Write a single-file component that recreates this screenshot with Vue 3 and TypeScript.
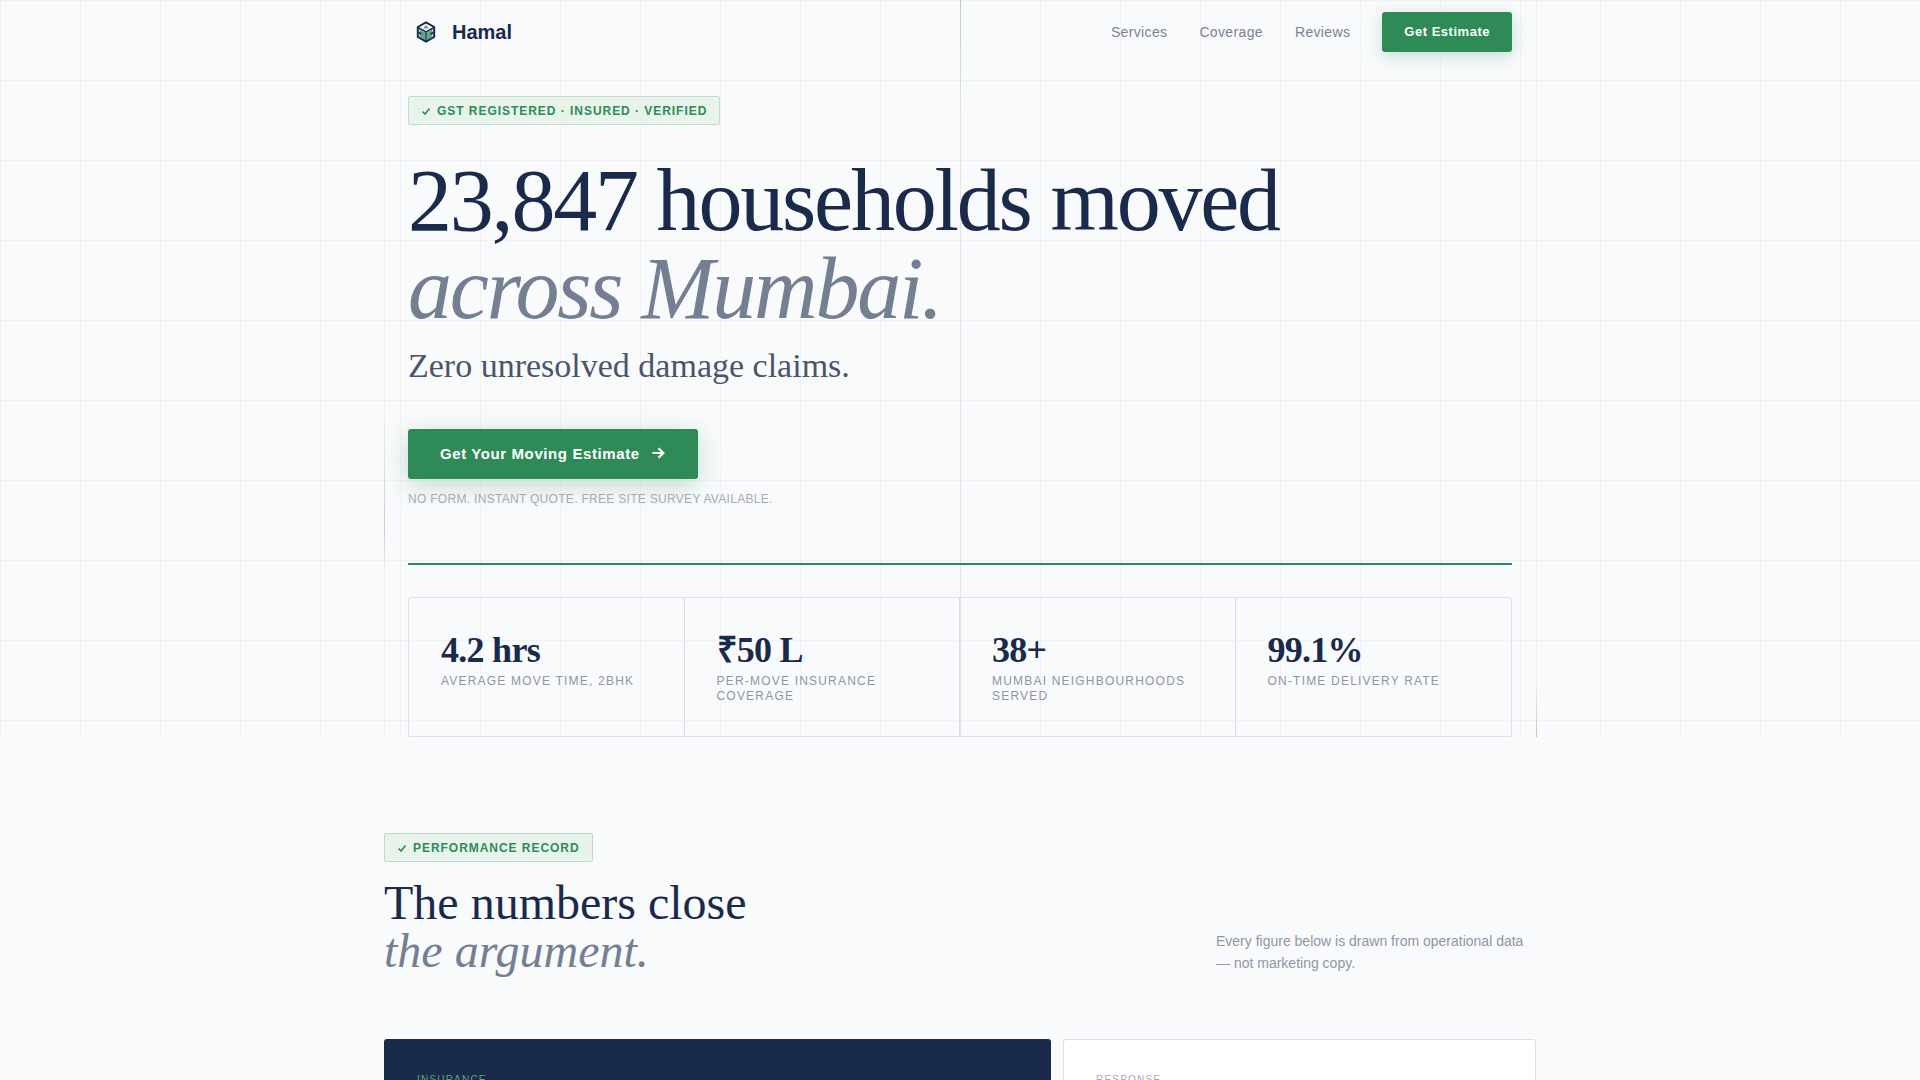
<script setup lang="ts">
// Hamal landing page: hero with stats strip, then the start of the performance section
interface Stat {
  value: string
  label: string
}

const navLinks: string[] = ['Services', 'Coverage', 'Reviews']

const stats: Stat[] = [
  { value: '4.2 hrs', label: 'Average move time, 2BHK' },
  { value: '₹50 L', label: 'Per-move insurance coverage' },
  { value: '38+', label: 'Mumbai neighbourhoods served' },
  { value: '99.1%', label: 'On-time delivery rate' }
]
</script>

<template>
  <div class="page">
    <section class="hero">
      <div class="grid-bg" aria-hidden="true"></div>
      <div class="rail rail-left" aria-hidden="true"></div>
      <div class="rail rail-center" aria-hidden="true"></div>
      <div class="rail rail-right" aria-hidden="true"></div>

      <div class="hero-inner">
        <nav class="nav">
          <a class="brand" href="#">
            <svg class="brand-icon" width="20" height="22" viewBox="0 0 20 22" fill="none">
              <path d="M10 4 7 7.500h6z" fill="#5fa883" />
              <path d="M3.500 8.500 9 11.500V19l-5.500-3z" fill="#5fa883" />
              <path d="M16.500 8.500 11 11.500V19l5.500-3z" fill="#5fa883" />
              <path d="M10 1.300 18.200 6v10L10 20.700 1.800 16V6z" stroke="#1a2a4a" stroke-width="2" stroke-linejoin="round" />
              <path d="M2 6.500 10 11l8-4.500M10 11v9.500M2.500 11.500l3 1.500M17.500 11.500l-3 1.500" stroke="#1a2a4a" stroke-width="1.500" />
            </svg>
            <span>Hamal</span>
          </a>
          <div class="nav-links">
            <a v-for="link in navLinks" :key="link" href="#">{{ link }}</a>
            <button class="nav-btn" type="button">Get Estimate</button>
          </div>
        </nav>

        <div class="badge">
          <svg width="10" height="10" viewBox="0 0 10 10" fill="none">
            <path d="M1.500 5.500 4 8l4.500-5.500" stroke="currentColor" stroke-width="1.600" />
          </svg>
          <span>GST Registered · Insured · Verified</span>
        </div>

        <h1 class="headline">
          23,847 households moved<br />
          <em>across Mumbai.</em>
        </h1>
        <p class="subhead">Zero unresolved damage claims.</p>

        <button class="cta" type="button">
          <span>Get Your Moving Estimate</span>
          <svg width="16" height="16" viewBox="0 0 16 16" fill="none">
            <path d="M2.500 8h10.500M8.500 3.200 13.300 8l-4.800 4.800" stroke="currentColor" stroke-width="2.200" />
          </svg>
        </button>
        <p class="cta-note">No form. Instant quote. Free site survey available.</p>

        <div class="divider"></div>

        <div class="stats">
          <div v-for="stat in stats" :key="stat.label" class="stat">
            <div class="stat-value">{{ stat.value }}</div>
            <div class="stat-label">{{ stat.label }}</div>
          </div>
        </div>
      </div>
    </section>

    <section class="record">
      <div class="record-head">
        <div>
          <div class="badge">
            <svg width="10" height="10" viewBox="0 0 10 10" fill="none">
              <path d="M1.500 5.500 4 8l4.500-5.500" stroke="currentColor" stroke-width="1.600" />
            </svg>
            <span>Performance Record</span>
          </div>
          <h2 class="record-title">
            The numbers close<br />
            <em>the argument.</em>
          </h2>
        </div>
        <p class="record-note">Every figure below is drawn from operational data — not marketing copy.</p>
      </div>

      <div class="bento">
        <div class="card card-dark"><span class="card-label">Insurance</span></div>
        <div class="card card-light"><span class="card-label">Response</span></div>
      </div>
    </section>
  </div>
</template>

<style scoped>
.page {
  height: 100vh;
  overflow: hidden;
  background: #f9fafc;
  font-family: 'Liberation Sans', Arial, sans-serif;
  color: #1a2a4a;
}

.hero {
  position: relative;
  height: 737px;
}

.grid-bg {
  position: absolute;
  inset: 0;
  background-image:
    linear-gradient(to right, rgba(26, 42, 74, 0.035) 1px, transparent 1px),
    linear-gradient(to bottom, rgba(26, 42, 74, 0.035) 1px, transparent 1px);
  background-size: 80px 80px;
}

.rail {
  position: absolute;
  top: 0;
  bottom: 0;
  width: 1px;
}

.rail-left {
  left: 384px;
  background: linear-gradient(to bottom, rgba(26, 42, 74, 0.04) 0, rgba(26, 42, 74, 0.04) 55%, rgba(26, 42, 74, 0.22) 72%, rgba(26, 42, 74, 0.04) 78%);
}

.rail-center {
  left: 960px;
  background: linear-gradient(to bottom, rgba(46, 139, 87, 0.3) 0, rgba(26, 42, 74, 0.07) 16%, rgba(26, 42, 74, 0.07) 100%);
}

.rail-right {
  left: 1536px;
  background: linear-gradient(to bottom, rgba(26, 42, 74, 0.04) 0, rgba(26, 42, 74, 0.04) 92%, rgba(26, 42, 74, 0.25) 100%);
}

.hero-inner {
  position: relative;
  width: 1104px;
  margin: 0 auto;
}

.nav {
  display: flex;
  align-items: center;
  justify-content: space-between;
  height: 64px;
}

.brand {
  display: flex;
  align-items: center;
  gap: 16px;
  padding-left: 8px;
  font-size: 20px;
  font-weight: 700;
  color: #1a2a4a;
  text-decoration: none;
}

.nav-links {
  display: flex;
  align-items: center;
  gap: 32px;
}

.nav-links a {
  font-size: 14px;
  letter-spacing: 0.025em;
  color: #7b8291;
  text-decoration: none;
}

.nav-btn {
  height: 40px;
  padding: 0 22px 2px;
  border: 0;
  border-radius: 3px;
  background: #2e8b57;
  color: #fff;
  font-family: inherit;
  font-size: 13px;
  font-weight: 700;
  letter-spacing: 0.04em;
  box-shadow: 0 4px 16px rgba(46, 139, 87, 0.25);
}

.badge {
  display: inline-flex;
  align-items: center;
  gap: 6px;
  height: 29px;
  box-sizing: border-box;
  padding: 0 12px;
  margin-top: 32px;
  border: 1px solid #bfdccb;
  border-radius: 2px;
  background: #e8f3ec;
  color: #2e8b57;
  font-size: 12px;
  font-weight: 700;
  letter-spacing: 0.08em;
  text-transform: uppercase;
}

.headline {
  margin: 32px 0 0;
  font-family: 'Liberation Serif', 'Times New Roman', serif;
  font-size: 88px;
  font-weight: 400;
  line-height: 1;
  letter-spacing: -0.025em;
  color: #1a2a4a;
}

.headline em {
  color: #747f92;
}

.subhead {
  margin: 13px 0 0;
  font-family: 'Liberation Serif', 'Times New Roman', serif;
  font-size: 34px;
  line-height: 40px;
  color: #4a5568;
}

.cta {
  display: flex;
  align-items: center;
  gap: 10px;
  height: 50px;
  margin-top: 43px;
  padding: 0 32px 2px;
  border: 0;
  border-radius: 3px;
  background: #2e8b57;
  color: #fff;
  font-family: inherit;
  font-size: 15px;
  font-weight: 700;
  letter-spacing: 0.04em;
  box-shadow: 0 6px 24px rgba(46, 139, 87, 0.28);
}

.cta-note {
  margin: 12px 0 0;
  font-size: 12px;
  line-height: 16px;
  letter-spacing: 0.025em;
  text-transform: uppercase;
  color: #a4aab6;
}

.divider {
  height: 2px;
  margin-top: 56px;
  background: #2e8b57;
}

.stats {
  display: grid;
  grid-template-columns: repeat(4, 1fr);
  margin-top: 32px;
  border: 1px solid #dde1e7;
  border-radius: 2px;
}

.stat {
  height: 138px;
  padding: 32px;
  box-sizing: border-box;
  border-right: 1px solid #d9dde3;
}

.stat:last-child {
  border-right: 0;
}

.stat-value {
  font-family: 'Liberation Serif', 'Times New Roman', serif;
  font-size: 36px;
  font-weight: 700;
  line-height: 40px;
  letter-spacing: -0.02em;
  color: #1a2a4a;
}

.stat-label {
  margin-top: 4px;
  font-size: 12px;
  line-height: 15px;
  letter-spacing: 0.1em;
  text-transform: uppercase;
  color: #8e95a3;
}

.record {
  width: 1152px;
  margin: 0 auto;
}

.record-head {
  display: flex;
  align-items: flex-end;
  justify-content: space-between;
  padding-top: 64px;
}

.record-title {
  margin: 17px 0 0;
  font-family: 'Liberation Serif', 'Times New Roman', serif;
  font-size: 48px;
  font-weight: 400;
  line-height: 1;
  color: #1a2a4a;
}

.record-title em {
  color: #747f92;
}

.record-note {
  width: 320px;
  margin: 0 0 1px;
  font-size: 14px;
  line-height: 22px;
  color: #9096a3;
}

.bento {
  display: grid;
  grid-template-columns: repeat(12, 1fr);
  gap: 12px;
  margin-top: 64px;
}

.card {
  height: 320px;
  padding: 32px;
  box-sizing: border-box;
  border: 1px solid transparent;
  border-radius: 3px;
}

.card-dark {
  grid-column: span 7;
  background: #1a2a4a;
}

.card-light {
  grid-column: span 5;
  background: #fff;
  border-color: #dde1e7;
}

.card-label {
  display: block;
  font-size: 10px;
  line-height: 15px;
  letter-spacing: 0.12em;
  text-transform: uppercase;
}

.card-dark .card-label {
  color: #4fae7c;
}

.card-light .card-label {
  color: #a4aab6;
}
</style>
